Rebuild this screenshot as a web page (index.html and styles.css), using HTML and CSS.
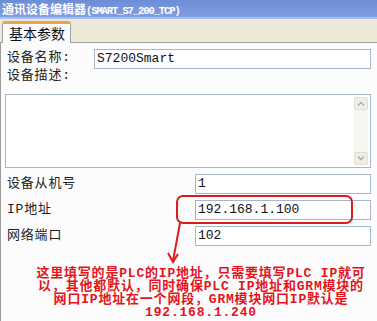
FILE: index.html
```html
<!DOCTYPE html>
<html lang="zh-CN">
<head>
    <meta charset="UTF-8">
    <meta name="viewport" content="width=device-width, initial-scale=1.0">
    <title>通讯设备编辑器</title>
    <link rel="stylesheet" href="styles.css">
</head>
<body>
    <header class="titlebar">通讯设备编辑器<span class="code">(SMART_S7_200_TCP)</span></header>

    <nav class="tabs">
        <div class="tab">基本参数</div>
    </nav>

    <main class="panel">
        <div class="row">
            <label class="label label-name">设备名称:</label>
            <div class="field">S7200Smart</div>
        </div>

        <label class="label desc-label">设备描述:</label>
        <div class="memo">
            <div class="scrollbar">
                <span class="sb-btn">
                    <svg width="8" height="5" viewBox="0 0 8 5"><path d="M1 4.5 L4 1.5 L7 4.5" fill="none" stroke="#a9a9a0" stroke-width="1.3"/></svg>
                </span>
                <span class="sb-btn">
                    <svg width="8" height="5" viewBox="0 0 8 5"><path d="M1 0.5 L4 3.5 L7 0.5" fill="none" stroke="#a9a9a0" stroke-width="1.3"/></svg>
                </span>
            </div>
        </div>

        <div class="row row-param">
            <label class="label">设备从机号</label>
            <div class="field">1</div>
        </div>
        <div class="row row-param">
            <label class="label">IP地址</label>
            <div class="field">192.168.1.100</div>
        </div>
        <div class="row row-param">
            <label class="label">网络端口</label>
            <div class="field">102</div>
        </div>

        <p class="note">
            这里填写的是PLC的IP地址，只需要填写PLC IP就可<br>
            以，其他都默认，同时确保PLC IP地址和GRM模块的<br>
            网口IP地址在一个网段，GRM模块网口IP默认是<br>
            192.168.1.240
        </p>

        <!-- red markup drawn over the form -->
        <svg class="annotation" width="377" height="278" viewBox="0 0 377 278">
            <rect x="176" y="153" width="175" height="27" rx="6" fill="none" stroke="#dc1c1c" stroke-width="2"/>
            <path d="M179 180 L172 218" fill="none" stroke="#dc1c1c" stroke-width="2"/>
            <path d="M167 210 L172 219 L177 211" fill="none" stroke="#dc1c1c" stroke-width="2"/>
        </svg>
    </main>
</body>
</html>
```

FILE: styles.css
```css
* {
    box-sizing: border-box;
    margin: 0;
    padding: 0;
}

html, body {
    width: 377px;
    height: 321px;
    overflow: hidden;
}

body {
    font-family: "Liberation Mono", "Noto Sans CJK SC", monospace;
    background-color: #fcfcfc;
    color: #222;
}

.titlebar {
    height: 19px;
    padding: 0 2px;
    background: linear-gradient(#6d8dd6, #809ee2);
    border-bottom: 2px solid #a9bdee;
    color: #fff;
    font: bold 12px/17px "Noto Sans CJK SC", sans-serif;
    white-space: nowrap;
}

.titlebar .code {
    font: bold 10.5px "Liberation Mono", monospace;
    letter-spacing: -1.1px;
}

.tabs {
    height: 24px;
    padding: 2px 0 0 2px;
    background-color: #ece9d8;
    border-bottom: 1px solid #a2a29a;
    display: flex;
}

.tab {
    width: 69px;
    height: 22px;
    margin-bottom: -1px;
    padding-left: 6px;
    background-color: #fcfcfe;
    border: 1px solid #9ca4a8;
    border-top: 3px solid #f0a53c;
    border-bottom: none;
    border-radius: 3px 3px 0 0;
    font: 14px/18px "Noto Sans CJK SC", sans-serif;
    color: #111;
}

.panel {
    position: relative;
    height: 278px;
    padding: 6px 6px 0 6px;
    border-left: 1px solid #9c9c9c;
}

.row {
    display: flex;
    align-items: center;
    height: 20px;
}

.row-param {
    margin-top: 6px;
}

.row-param:first-of-type {
    margin-top: 0;
}

.label {
    font-size: 13px;
    letter-spacing: 0.8px;
    line-height: 16px;
    width: 87px;
    flex-shrink: 0;
}

.row-param .label {
    width: 188px;
}

.label-name {
    margin-top: -3px;
}

.desc-label {
    display: block;
    width: auto;
    margin-top: -1px;
}

.field {
    flex: 1;
    height: 20px;
    padding: 0 2px;
    background-color: #fff;
    border: 1px solid #a7b6c8;
    font-size: 13px;
    line-height: 18px;
    color: #111;
}

.memo {
    height: 74px;
    margin: 10px 0 4px -2px;
    padding: 2px 2px;
    background-color: #fff;
    border: 1px solid #a7b6c8;
    display: flex;
    justify-content: flex-end;
}

.scrollbar {
    width: 14px;
    background-color: #f6f5ef;
    display: flex;
    flex-direction: column;
    justify-content: space-between;
}

.sb-btn {
    height: 13px;
    background-color: #eeede6;
    border: 1px solid #e2e0d6;
    border-radius: 2px;
    display: flex;
    align-items: center;
    justify-content: center;
}

.note {
    margin: 21px 0 0 24px;
    text-align: center;
    color: #e3141c;
    font-size: 13px;
    font-weight: bold;
    letter-spacing: 0.8px;
    line-height: 13px;
    white-space: nowrap;
}

.annotation {
    position: absolute;
    left: 0;
    top: 0;
    pointer-events: none;
}
```
